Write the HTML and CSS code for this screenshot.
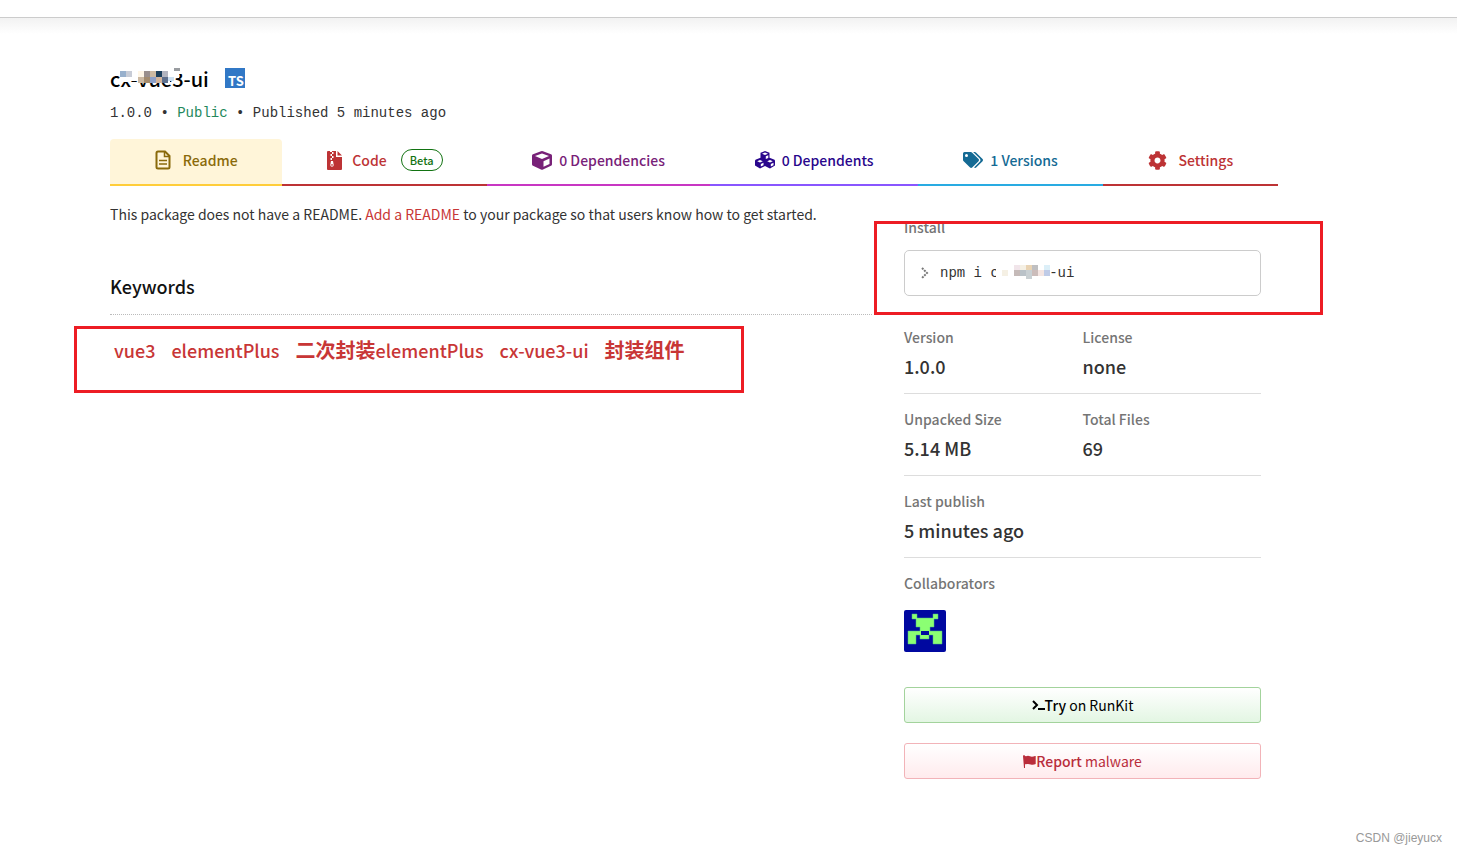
FILE: index.html
```
<!DOCTYPE html>
<html lang="en">
<head>
<meta charset="utf-8">
<title>cx-vue3-ui - npm</title>
<link rel="stylesheet" href="styles.css">
</head>
<body>
<div class="topbar"></div>
<div class="page">
  <header class="package">
    <div class="title-row">
      <h1 class="title">cx-vue3-ui
        <svg class="mosaic title-mosaic" width="74" height="18" viewBox="0 0 74 18" shape-rendering="crispEdges">
          <path fill="#fff" d="M10 0h64v2h-2v4h-3v4h-9v5H38l-4-2H22l-6 1-6-1z"/>
          <path fill="#98b0cc" d="M10 3h6v6h-6z"/><path fill="#c8ccd6" d="M16 3h6v6h-6z"/>
          <path fill="#fff6e6" d="M28 3h6v6h-6z"/><path fill="#9a8f8c" d="M34 3h6v6h-6z"/>
          <path fill="#ccb9a2" d="M40 3h6v6h-6zM28 9h6v6h-6z"/><path fill="#1c3f5c" d="M46 3h6v6h-6z"/>
          <path fill="#b2b4bf" d="M52 3h6v6h-6z"/><path fill="#a38b6d" d="M34 9h6v6h-6z"/>
          <path fill="#8c9fc8" d="M40 9h6v6h-6z"/><path fill="#d2b49c" d="M46 9h6v6h-6z"/>
          <path fill="#5e6f8c" d="M52 9h6v6h-6z"/><path fill="#cce0f2" d="M58 9h6v4h-6z"/>
          <path fill="#999ca0" d="M64 0h6v3h-6z"/>
        </svg>
      </h1>
      <span class="ts">TS</span>
    </div>
    <p class="meta">1.0.0 • <span class="public">Public</span> • Published 5 minutes ago</p>
  </header>

  <nav class="tabs">
    <a class="tab tab-readme" href="#readme">
      <svg width="16" height="20" viewBox="0 0 16 20" fill="none" stroke="currentColor" stroke-width="2"><path d="M3 1.500h7l4.500 4.500v11q0 1.500-1.500 1.500H3q-1.500 0-1.500-1.500V3q0-1.500 1.500-1.500z"/><path d="M9.500 2v4.500H14" stroke-width="1.500"/><path d="M4 10.500h8M4 14h8" stroke-width="1.500"/></svg>
      <span class="wide-label">Readme</span></a>
    <a class="tab tab-code" href="#code">
      <svg width="15" height="19" viewBox="0 0 15 19" fill="currentColor"><path fill-rule="evenodd" d="M1 0h2v1h2V0h4v6h6v12q0 1-1 1H1q-1 0-1-1V1q0-1 1-1zM5 1v2h1.500V1zM3.500 3v2H5V3zM5 5v2h1.500V5zM3.500 7v2H5V7zM4 10l-.7 4q0 1.800 1.700 1.800T6.700 14L6 10zm1 3q.8 0 .8.900t-.8.9-.8-.9.8-.9z"/><path d="M10.500 0 15 4.500h-4.500z"/></svg>
      <span class="code-label">Code</span><span class="beta">Beta</span></a>
    <a class="tab tab-dependencies" href="#dependencies">
      <svg width="20" height="19" viewBox="0 0 20 19" fill="currentColor"><path fill-rule="evenodd" d="M9 .3q1-.5 2 0l8 3q1 .4 1 1.500v8.500q0 1-1 1.500l-8 3.800q-1 .5-2 0l-8-3.800q-1-.5-1-1.500V4.800q0-1.100 1-1.500zM10 2.400 3 5l7 3 7-3zM11.500 10.200v5.600L17.500 13V7.600z"/></svg>
      <span>0 Dependencies</span></a>
    <a class="tab tab-dependents" href="#dependents">
      <svg width="20" height="18" viewBox="0 0 20 18" fill="currentColor"><path fill-rule="evenodd" d="m10 0 4.500 1.700v5.100L19 8.600q1 .3 1 1.300v4.700L15 17.500 10 15l-5 2.500-5-2.900V9.900q0-1 1-1.300l4.500-1.800V1.700zm0 1.500L7 2.700 10 4l3-1.300zM10.800 5.300v2.600L13.300 7V4.300zM5 9 2.200 10.200 5 11.500l2.800-1.300zm.8 3.900v2.700l2.700-1.300v-2.600zM15 9l-2.800 1.200 2.800 1.300 2.800-1.300zm.8 3.900v2.700l2.700-1.300v-2.600z"/></svg>
      <span>0 Dependents</span></a>
    <a class="tab tab-versions" href="#versions">
      <svg width="20" height="16" viewBox="0 0 640 512" fill="currentColor"><path d="M497.900 225.900 286.100 14.100A48 48 0 0 0 252.100 0H48A48 48 0 0 0 0 48v204.100a48 48 0 0 0 14.100 33.900l211.800 211.800c18.700 18.700 49.100 18.700 67.900 0l204.100-204.100c18.700-18.700 18.700-49.100 0-67.800zM112 160a48 48 0 1 1 0-96 48 48 0 0 1 0 96zM625.900 293.800 421.800 497.900c-18.700 18.700-49.100 18.700-67.900 0l-.4-.4L527.600 323.500a83 83 0 0 0 0-120.400L324.500 0H380a48 48 0 0 1 33.900 14.100l212 211.800c18.700 18.700 18.700 49.100 0 67.900z"/></svg>
      <span>1 Versions</span></a>
    <a class="tab tab-settings" href="#settings">
      <svg width="19" height="19" viewBox="0 0 512 512" fill="currentColor"><path d="M487.400 315.700l-42.600-24.600c4.300-23.200 4.300-47 0-70.200l42.600-24.600c4.900-2.800 7.100-8.600 5.500-14-11.100-35.600-30-67.800-54.700-94.600-3.800-4.100-10-5.100-14.800-2.300L380.800 110c-17.900-15.400-38.500-27.300-60.800-35.100V25.800c0-5.600-3.900-10.500-9.400-11.700-36.700-8.200-74.300-7.800-109.200 0-5.500 1.200-9.400 6.100-9.400 11.700V75c-22.200 7.900-42.800 19.800-60.800 35.100L88.700 85.500c-4.900-2.800-11-1.900-14.800 2.300-24.700 26.700-43.600 58.900-54.700 94.600-1.700 5.400.6 11.200 5.500 14L67.300 221c-4.300 23.200-4.300 47 0 70.200l-42.600 24.600c-4.900 2.800-7.100 8.600-5.500 14 11.100 35.600 30 67.800 54.700 94.600 3.800 4.100 10 5.100 14.800 2.300l42.600-24.600c17.900 15.400 38.500 27.300 60.800 35.100v49.200c0 5.600 3.900 10.500 9.400 11.700 36.700 8.200 74.300 7.800 109.200 0 5.500-1.200 9.400-6.100 9.400-11.700v-49.200c22.200-7.900 42.800-19.800 60.800-35.100l42.600 24.600c4.900 2.800 11 1.900 14.800-2.300 24.700-26.700 43.600-58.900 54.700-94.600 1.500-5.500-.7-11.300-5.600-14.100zM256 336c-44.100 0-80-35.900-80-80s35.900-80 80-80 80 35.900 80 80-35.900 80-80 80z"/></svg>
      <span class="wide-label">Settings</span></a>
  </nav>

  <div class="columns">
    <main class="main">
      <p class="notice">This package does not have a README. <a href="#add">Add a README</a> to your package so that users know how to get started.</p>
      <h2 class="keywords-title">Keywords</h2>
      <div class="keywords">
        <a href="#k1">vue3</a><a href="#k2">elementPlus</a><a href="#k3"><b>二次封装</b>elementPlus</a><a href="#k4">cx-vue3-ui</a><a href="#k5"><b>封装组件</b></a>
        <div class="mark mark-keywords"></div>
      </div>
    </main>

    <aside class="side">
      <section class="install">
        <h3>Install</h3>
        <button class="command" type="button">
          <svg width="8" height="12" viewBox="0 0 8 12" fill="none" stroke="#777" stroke-width="2" stroke-dasharray="2 1"><path d="m1 1 5 5-5 5"/></svg>
          <code>npm i cx-vue3-ui
            <svg class="mosaic command-mosaic" width="54" height="18" viewBox="0 0 54 18" shape-rendering="crispEdges">
              <path fill="#fff" d="M0 0h54v18H0z"/><path fill="#f5f0e4" d="M6 5h6v6H6zM24 0h6v6h-6z"/>
              <path fill="#f1e5ea" d="M18 0h6v5h-6z"/><path fill="#c5bab8" d="M18 5h6v6h-6z"/>
              <path fill="#bac2c8" d="M24 5h6v6h-6z"/><path fill="#e9d3b3" d="M30 0h6v5h-6z"/>
              <path fill="#c9d0d3" d="M30 5h6v9h-6z"/><path fill="#bfbfc1" d="M36 0h6v5h-6z"/>
              <path fill="#cbbcba" d="M36 5h6v6h-6z"/><path fill="#f4e5e2" d="M42 5h6v6h-6z"/>
              <path fill="#dceff8" d="M48 0h6v5h-6z"/><path fill="#bfcbe7" d="M48 5h6v6h-6z"/>
            </svg>
          </code>
        </button>
        <div class="mark mark-install"></div>
      </section>
      <section class="facts">
        <div><h3>Version</h3><p>1.0.0</p></div>
        <div><h3>License</h3><p>none</p></div>
      </section>
      <section class="facts">
        <div><h3>Unpacked Size</h3><p>5.14 MB</p></div>
        <div><h3>Total Files</h3><p>69</p></div>
      </section>
      <section class="facts">
        <div><h3>Last publish</h3><p>5 minutes ago</p></div>
      </section>
      <section class="people">
        <h3>Collaborators</h3>
        <a class="avatar" href="#user" aria-label="Collaborator">
          <svg width="42" height="42" viewBox="0 0 42 42"><path fill="#0008a0" d="M0 0h42v42H0z"/><path fill="#8bff73" stroke="#4fb48a" stroke-width=".5" d="M8 4h5v4h16V4h5v5h-4v8h-4v4h12v13h-9v-9h-4v4h-9v-4h-4v9H4V21h12v-4h-4V9H8z"/><path fill="#0008a0" d="M17 21h8v4h-8z"/></svg>
        </a>
      </section>
      <a class="action runkit" href="#runkit"><svg width="13" height="11" viewBox="0 0 13 11" fill="none" stroke="currentColor" stroke-width="2"><path d="m1 1 4 4-4 4M6 9h7"/></svg><b>Try</b>&nbsp;on RunKit</a>
      <a class="action report" href="#report"><svg width="13" height="13" viewBox="0 0 13 13" fill="currentColor"><path d="M0 1q1-2 2 0l1 .3q2-.9 4 0t5-.3h.700v8q-2.700 1.300-5 .4T2 9.300V13H1z"/></svg><b>Report</b>&nbsp;malware</a>
    </aside>
  </div>
</div>
<footer class="credit">CSDN @jieyucx</footer>
</body>
</html>
```
FILE: styles.css
```
* { box-sizing: border-box; }
body { margin: 0; background: #fff; color: #333; font-family: "Noto Sans CJK SC", "Open Sans", sans-serif; font-size: 14px; line-height: 20px; }
h1, h2, h3, p { margin: 0; }
a { color: #c83636; text-decoration: none; }
svg { display: block; flex: none; }
button, code { font: inherit; color: inherit; }
.topbar { height: 42px; background: linear-gradient(#fff 17px, #ccc 17px, #ccc 18px, #f2f2f2 18px, #fff 34px); }
.page { padding: 22px 179px 0 110px; }
.title-row { display: flex; align-items: center; gap: 16px; height: 28px; }
.title { position: relative; padding-top: 2px; color: #000; font-size: 20px; font-weight: 500; line-height: 32px; }
.mosaic { position: absolute; }
.title-mosaic { left: 0; top: 7px; }
.ts { width: 20px; height: 20px; padding: 5px 1px 0 0; background: #3178c6; color: #fff; font-size: 13px; font-weight: 700; line-height: 16px; text-align: right; }
.meta { margin-top: 11px; font-family: "Liberation Mono", monospace; font-size: 14px; }
.public { color: #24885c; }
.tabs { display: flex; margin-top: 16px; }
.tab { display: flex; flex: 1 0 auto; align-items: center; justify-content: center; gap: 7px; height: 47px; padding-bottom: 3px; border-bottom: 2px solid; font-weight: 500; white-space: nowrap; }
.tab-readme { background: #fff5d9; border-color: #ffcd3a; border-radius: 4px 4px 0 0; color: #8a6a0a; }
.tab-code { border-color: #bd3335; color: #bd3335; }
.tab-dependencies { border-color: #c836c3; color: #782178; }
.tab-dependents { border-color: #8956ff; color: #29068c; }
.tab-versions { border-color: #29abe2; color: #146a94; }
.tab-settings { border-color: #bd3335; color: #bd3335; }
.wide-label { margin-left: 5px; }
.code-label { margin-left: 3px; }
.beta { margin-left: 7px; padding: 0 8px; border: 1px solid #127312; border-radius: 11px; color: #127312; font-size: 11px; }
.columns { display: flex; justify-content: space-between; padding-right: 17px; }
.main { flex: 1; }
.notice { margin-top: 18px; }
.keywords-title { margin-top: 48px; padding-bottom: 14px; border-bottom: 1px dotted #bbb; color: #111; font-size: 18px; font-weight: 500; line-height: 28px; }
.keywords { position: relative; display: flex; gap: 16px; padding: 21px 4px; font-size: 18px; font-weight: 500; line-height: 28px; }
.keywords b { font-size: 20px; }
.mark { position: absolute; border: 3px solid #ed1c24; pointer-events: none; }
.mark-keywords { left: -36px; top: 11px; width: 670px; height: 67px; }
.side { width: 357px; margin-left: 32px; padding-top: 31px; }
.side h3 { color: #757575; font-size: 14px; font-weight: 500; line-height: 20px; }
.install { position: relative; }
.mark-install { left: -30px; top: 4px; width: 449px; height: 94px; }
.command { display: flex; align-items: center; gap: 11px; width: 100%; height: 46px; margin: 13px 0 31px; padding: 0 16px; border: 1px solid #ccc; border-radius: 5px; background: #fff; }
.command code { position: relative; font-family: "Liberation Mono", monospace; font-size: 14px; }
.command-mosaic { left: 56px; top: 2px; }
.facts { display: grid; grid-template-columns: 1fr 1fr; height: 67px; margin-bottom: 15px; border-bottom: 1px solid #ddd; }
.facts p { margin-top: 6px; font-size: 18px; font-weight: 500; line-height: 26px; }
.avatar { display: block; width: 42px; margin-top: 17px; border-radius: 2px; overflow: hidden; }
.action { display: flex; align-items: center; justify-content: center; height: 36px; margin-top: 20px; border: 1px solid; border-radius: 3px; }
.action b { font-weight: 500; }
.runkit { margin-top: 35px; border-color: #a3d39c; background: linear-gradient(#fff, #e3f6e3); color: #000; }
.report { border-color: #f2b3b8; background: linear-gradient(#fff, #ffebed); color: #b92d3b; }
.credit { padding: 49px 15px 0 0; color: #999; font-family: "Liberation Sans", sans-serif; font-size: 12px; text-align: right; }
```
